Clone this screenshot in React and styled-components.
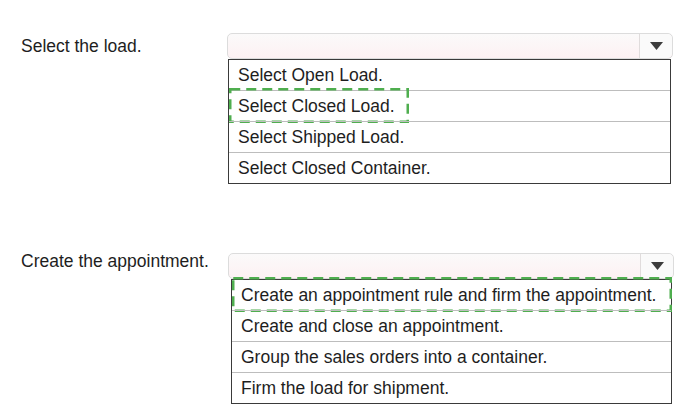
import React from 'react'
import styled, { createGlobalStyle } from 'styled-components'

const questions = [
  {
    label: 'Select the load.',
    labelTop: 1,
    options: ['Select Open Load.', 'Select Closed Load.', 'Select Shipped Load.', 'Select Closed Container.'],
    answer: 1,
    answerWidth: 180,
  },
  {
    label: 'Create the appointment.',
    labelTop: -4,
    options: [
      'Create an appointment rule and firm the appointment.',
      'Create and close an appointment.',
      'Group the sales orders into a container.',
      'Firm the load for shipment.',
    ],
    answer: 0,
  },
]

export default function App() {
  return (
    <>
      <Global />
      <Page>
        {questions.map((q, i) => (
          <Question key={i}>
            <Label $top={q.labelTop}>{q.label}</Label>
            <Control $shift={i === 0 ? 0 : 1}>
              <SelectBox>
                <Arrow>
                  <svg width="13" height="8" viewBox="0 0 13 8">
                    <path d="M0 0 L13 0 L6.5 8 Z" fill="#3c3c3c" />
                  </svg>
                </Arrow>
              </SelectBox>
              <List $shift={i === 0 ? 0 : 2}>
                {q.options.map((opt, j) => (
                  <Row key={j}>
                    {opt}
                    {j === q.answer && (
                      <Highlight $width={q.answerWidth}>
                        <svg width="100%" height="100%">
                          <rect x="1.25" y="1.25" width="calc(100% - 2.5px)" height="calc(100% - 2.5px)"
                            fill="none" stroke="#4fae4f" strokeWidth="2.5" strokeDasharray="10 6" />
                        </svg>
                      </Highlight>
                    )}
                  </Row>
                ))}
              </List>
            </Control>
          </Question>
        ))}
      </Page>
    </>
  )
}

const Global = createGlobalStyle`
  body {
    margin: 0;
    background: #fff;
    font-family: "Liberation Sans", Arial, sans-serif;
  }
`;

const Page = styled.div`
  width: 686px;
  height: 414px;
  padding: 33px 0 0 21px;
  box-sizing: border-box;
  display: flex;
  flex-direction: column;
  gap: 69px;
`;

const Question = styled.div`
  display: flex;
  align-items: flex-start;
`;

const Label = styled.div`
  width: 206px;
  font-size: 17.5px;
  color: #1e1e1e;
  line-height: 24px;
  margin-top: ${p => p.$top}px;
`;

const Control = styled.div`
  width: 446px;
  margin-left: ${p => p.$shift}px;
  display: flex;
  flex-direction: column;
`;

const SelectBox = styled.div`
  height: 24px;
  border: 1px solid #dcdcdc;
  border-radius: 5px;
  background: linear-gradient(#fbfafa, #fdf1f3);
  display: flex;
  justify-content: flex-end;
`;

const Arrow = styled.div`
  width: 32px;
  border-left: 1px solid #e0dcdc;
  display: flex;
  align-items: center;
  justify-content: center;
  background: #fafafa;
  border-radius: 0 5px 5px 0;
`;

const List = styled.div`
  margin: 0 2px 0 ${p => 1 + p.$shift}px;
  border: 1.5px solid #3a3a3a;
  display: flex;
  flex-direction: column;
`;

const Row = styled.div`
  position: relative;
  height: 30px;
  line-height: 30px;
  padding-left: 9px;
  font-size: 17.5px;
  color: #1e1e1e;
  & + & {
    border-top: 1px solid #bdbdbd;
  }
`;

const Highlight = styled.div`
  position: absolute;
  left: 0;
  top: -3px;
  bottom: -2px;
  width: ${p => (p.$width ? p.$width + 'px' : 'calc(100% + 1px)')};
  pointer-events: none;
  svg { display: block; }
`;
